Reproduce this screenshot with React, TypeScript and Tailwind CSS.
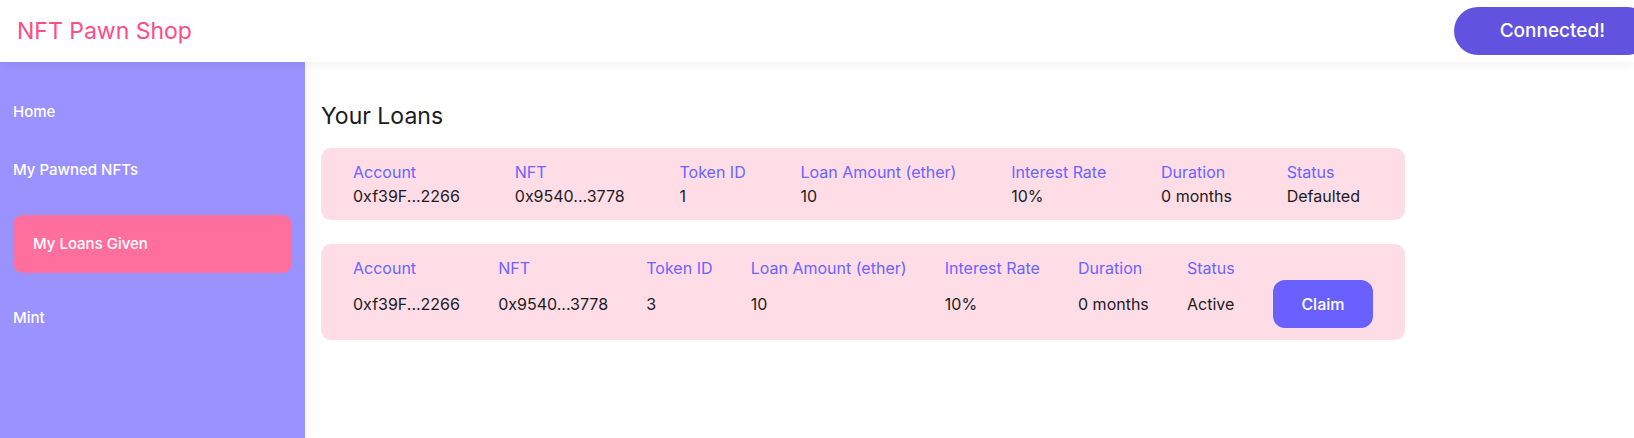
import { useState } from 'react';

type Loan = {
  account: string;
  nft: string;
  tokenId: string;
  amount: string;
  rate: string;
  duration: string;
  status: string;
  claimable?: boolean;
};

const loans: Loan[] = [
  { account: '0xf39F...2266', nft: '0x9540...3778', tokenId: '1', amount: '10', rate: '10%', duration: '0 months', status: 'Defaulted' },
  { account: '0xf39F...2266', nft: '0x9540...3778', tokenId: '3', amount: '10', rate: '10%', duration: '0 months', status: 'Active', claimable: true },
];

const navItems = ['Home', 'My Pawned NFTs', 'My Loans Given', 'Mint'];

function Field({ label, value }: { label: string; value: string }) {
  return (
    <div className="flex flex-col">
      <span className="text-[16px] leading-6 text-[#6a63fe]">{label}</span>
      <div className="flex flex-1 items-center">
        <span className="text-[16px] leading-6 text-[#1b1b1f]">{value}</span>
      </div>
    </div>
  );
}

function LoanCard({ loan }: { loan: Loan }) {
  return (
    <div
      className={`flex w-[1084px] justify-between rounded-[10px] bg-[#ffdde6] py-3 pl-8 ${
        loan.claimable ? 'pr-8' : 'pr-[45px]'
      }`}
    >
      <Field label="Account" value={loan.account} />
      <Field label="NFT" value={loan.nft} />
      <Field label="Token ID" value={loan.tokenId} />
      <Field label="Loan Amount (ether)" value={loan.amount} />
      <Field label="Interest Rate" value={loan.rate} />
      <Field label="Duration" value={loan.duration} />
      <Field label="Status" value={loan.status} />
      {loan.claimable && (
        <div className="flex flex-col">
          <div className="h-6" />
          <button className="h-12 w-[100px] rounded-xl bg-[#6a5fff] text-[16px] font-medium text-white">
            Claim
          </button>
        </div>
      )}
    </div>
  );
}

export default function App() {
  const [active, setActive] = useState('My Loans Given');

  return (
    <div className="flex h-[438px] flex-col overflow-hidden bg-white font-['Inter','Noto_Sans',sans-serif]">
      {/* Header */}
      <header className="relative z-20 flex h-[62px] shrink-0 items-center justify-between bg-white shadow-[0_2px_8px_rgba(0,0,0,0.06)]">
        <h1 className="pl-[17px] text-[23px] text-[#ff4b86]">NFT Pawn Shop</h1>
        <button className="mr-[-17px] h-12 rounded-full bg-[#6153df] px-[46px] text-[19px] font-medium text-white">
          Connected!
        </button>
      </header>

      <div className="flex flex-1">
        {/* Sidebar */}
        <aside className="relative z-10 w-[305px] shrink-0 bg-[#9a92fe] pt-[21px] shadow-[2px_0_10px_rgba(0,0,0,0.05)]">
          <nav className="flex flex-col">
            {navItems.map((item, i) => {
              const isActive = item === active;
              return (
                <button
                  key={item}
                  onClick={() => setActive(item)}
                  className={
                    isActive
                      ? 'mx-[13px] mt-4 flex h-[58px] items-center rounded-[10px] bg-[#ff6f9d] px-5 text-left text-[15px] font-medium text-white'
                      : `flex h-[58px] items-center px-[13px] text-left text-[15px] font-medium text-white ${i === 3 ? 'mt-4' : ''}`
                  }
                >
                  {item}
                </button>
              );
            })}
          </nav>
        </aside>

        {/* Main */}
        <main className="flex-1 px-4 pt-[38px]">
          <h2 className="mb-4 text-[23px] leading-8 text-[#1b1b1f]">Your Loans</h2>
          <div className="flex flex-col gap-6">
            {loans.map((loan, i) => (
              <LoanCard key={i} loan={loan} />
            ))}
          </div>
        </main>
      </div>
    </div>
  );
}
